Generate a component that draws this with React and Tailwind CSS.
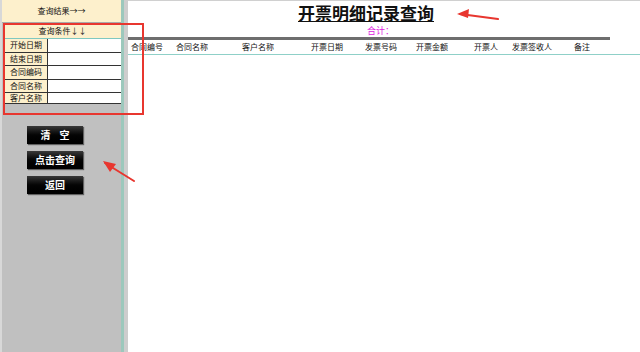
import React from 'react'

const font = { fontFamily: '"Noto Sans CJK SC", "Liberation Sans", sans-serif' }

const conditions = ['开始日期', '结束日期', '合同编码', '合同名称', '客户名称']

const columns = [
  { label: '合同编号', w: 'w-[45px]' },
  { label: '合同名称', w: 'w-[66px]' },
  { label: '客户名称', w: 'w-[69px]' },
  { label: '开票日期', w: 'w-[54px]' },
  { label: '发票号码', w: 'w-[51px]' },
  { label: '开票金额', w: 'w-[58px]' },
  { label: '开票人', w: 'w-[38px]' },
  { label: '发票签收人', w: 'w-[62px]' },
  { label: '备注', w: 'w-[40px]' }
]

const BlackButton = ({ children }) => (
  <button className="w-[56px] h-[18px] bg-gradient-to-b from-[#3a3a3a] via-[#050505] to-[#000] text-white text-[10px] font-bold leading-none shadow-[1px_1px_1px_rgba(0,0,0,0.5)] flex items-center justify-center">
    {children}
  </button>
)

// red annotation arrow: line + head
const Arrow = ({ className, x1, y1, x2, y2, head }) => (
  <svg className={className} viewBox="0 0 60 30" width="60" height="30">
    <line x1={x1} y1={y1} x2={x2} y2={y2} stroke="#e8362f" strokeWidth="2" strokeLinecap="round" />
    <polygon points={head} fill="#e8362f" />
  </svg>
)

export default function App() {
  return (
    <div className="relative w-[640px] h-[352px] flex bg-white overflow-hidden text-[#111]" style={font}>
      {/* left panel */}
      <div className="w-[121px] h-full bg-[#c0c0c0] border-l-2 border-[#d8d8d8] flex flex-col">
        <div className="h-[23px] bg-[#fdf0cc] flex items-center justify-center text-[8px] border-b border-[#aaa]">
          查询结果→→
        </div>
        <div className="mt-[1px] ml-[2px] h-[15px] bg-[#fdf0cc] flex items-center justify-center text-[8px] border-b border-[#7fc8c0]">
          查询条件↓↓
        </div>
        <div className="ml-[2px] flex flex-col">
          {conditions.map((c, i) => (
            <div key={c} className={`flex ${i === 4 ? 'h-[11px]' : 'h-[13.5px]'} border-b border-[#333]`}>
              <div className="w-[44px] bg-[#fdf0cc] border-l border-r border-[#333] flex items-center justify-center text-[8px] leading-none">
                {c}
              </div>
              <div className="flex-1 bg-white" />
            </div>
          ))}
        </div>
        <div className="mt-[22px] ml-[25px] flex flex-col gap-[7px]">
          <BlackButton>清&nbsp;&nbsp;&nbsp;&nbsp;空</BlackButton>
          <BlackButton>点击查询</BlackButton>
          <BlackButton>返回</BlackButton>
        </div>
      </div>
      <div className="w-[3px] h-full bg-[#9cc8bc]" />
      <div className="w-[4px] h-full bg-[#cdcdcd]" />

      {/* main */}
      <div className="flex-1 flex flex-col border-t border-[#d0d0d0]">
        <div className="h-[23px] pl-[170px] flex items-start pt-[3px]">
          <span
            className="text-[17px] font-bold leading-[17px] underline underline-offset-[1px] decoration-1"
            style={{ fontFamily: '"Noto Sans CJK SC", serif' }}
          >
            开票明细记录查询
          </span>
        </div>
        <div className="h-[13px] pl-[239px] flex items-center text-[9px] leading-none text-[#e020e0]">合计：</div>
        <div className="w-[482px] h-[3px] bg-[#6e6e6e]" />
        <div className="h-[15px] flex items-center pl-[3px] text-[8px] border-b border-[#8fd0c8]">
          {columns.map((c) => (
            <div key={c.label} className={c.w}>{c.label}</div>
          ))}
        </div>
      </div>

      {/* red annotation box */}
      <div className="absolute left-[3px] top-[23px] w-[141px] h-[92px] border-2 border-[#e8362f]" />
      <Arrow className="absolute left-[452px] top-[2px]" x1="46" y1="17" x2="8" y2="12" head="5,12 17,7 16,16" />
      <Arrow className="absolute left-[100px] top-[158px]" x1="34" y1="23" x2="5" y2="5" head="3,3 16,6 10,14" />
    </div>
  )
}
